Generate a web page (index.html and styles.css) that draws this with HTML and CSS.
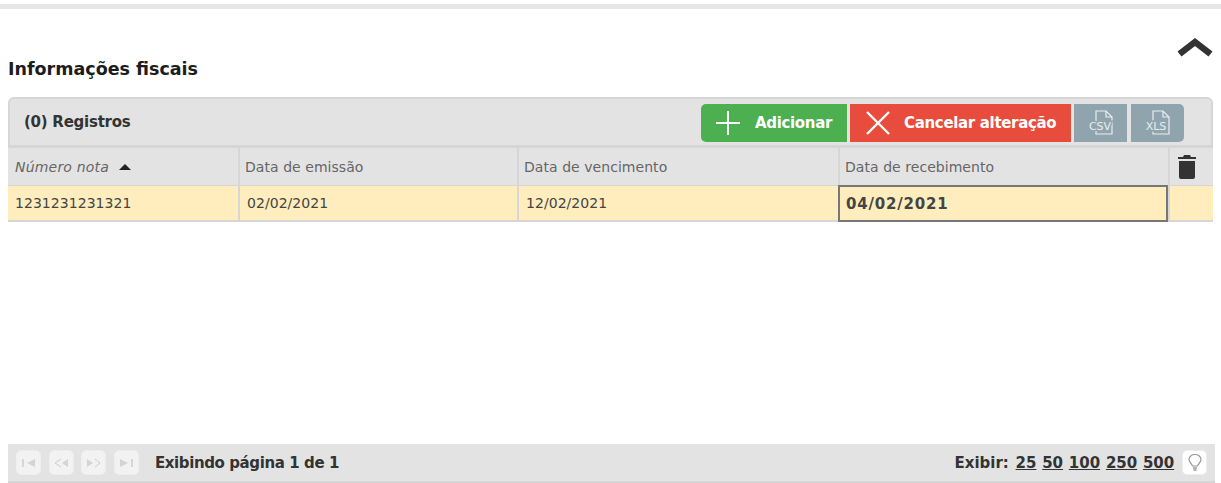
FILE: index.html
```html
<!DOCTYPE html>
<html lang="en">
<head>
    <meta charset="UTF-8">
    <title>Informações fiscais</title>
    <link rel="stylesheet" href="styles.css">
</head>
<body>

<div class="topLine"></div>

<div class="titleBar">
    <h2>Informações fiscais</h2>
    <a href="javascript:;" class="btnCollapse">
        <svg width="36" height="22" viewBox="0 0 36 22"><path d="M2.500 18 L18 6 L33.500 18" fill="none" stroke="#333" stroke-width="6.500"/></svg>
    </a>
</div>

<div class="grid">
    <div class="gridHead">
        <b>(0) Registros</b>
        <div class="tools">
            <a href="javascript:;" class="btn green">
                <svg width="26" height="26" viewBox="0 0 26 26"><path d="M13 1V25M1 13H25" stroke="#fff" stroke-width="2"/></svg>
                <span>Adicionar</span>
            </a>
            <a href="javascript:;" class="btn red">
                <svg width="26" height="26" viewBox="0 0 26 26"><path d="M2 2L24 24M24 2L2 24" stroke="#fff" stroke-width="2.4"/></svg>
                <span>Cancelar alteração</span>
            </a>
            <a href="javascript:;" class="btnFile">
                <svg width="30" height="32" viewBox="0 0 30 32"><path d="M10 14V4H20L26 10V27H10V24M20 4V10H26" fill="none" stroke="#e8eef0" stroke-width="1.200"/><text x="14" y="23" text-anchor="middle">CSV</text></svg>
            </a>
            <a href="javascript:;" class="btnFile lastBtn">
                <svg width="30" height="32" viewBox="0 0 30 32"><path d="M10 14V4H20L26 10V27H10V24M20 4V10H26" fill="none" stroke="#e8eef0" stroke-width="1.200"/><text x="13" y="23" text-anchor="middle">XLS</text></svg>
            </a>
        </div>
    </div>
    <div class="row thead">
        <div class="cell"><i>Número nota</i><span class="sort"></span></div>
        <div class="cell">Data de emissão</div>
        <div class="cell">Data de vencimento</div>
        <div class="cell">Data de recebimento</div>
        <div class="cell trash">
            <svg width="18" height="24" viewBox="0 0 18 24"><path d="M6 0H12L13 2H18V4H0V2H5ZM1 6H17V22Q17 24 15 24H3Q1 24 1 22Z" fill="#333"/></svg>
        </div>
    </div>
    <div class="row tbody">
        <div class="cell">1231231231321</div>
        <div class="cell pad">02/02/2021</div>
        <div class="cell pad">12/02/2021</div>
        <div class="cell editing">04/02/2021</div>
        <div class="cell"></div>
    </div>
</div>

<div class="pager">
    <div class="pagerLeft">
        <a href="javascript:;" class="pageBtn"><svg width="14" height="10" viewBox="0 0 14 10"><path d="M1 1V9" stroke="#ccc" stroke-width="1.500"/><path d="M13 1V9L5 5Z" fill="#d4d4d4"/></svg></a>
        <a href="javascript:;" class="pageBtn"><svg width="16" height="10" viewBox="0 0 16 10"><path d="M8 1L2 5L8 9" fill="none" stroke="#ccc"/><path d="M15 1V9L9 5Z" fill="#d4d4d4"/></svg></a>
        <a href="javascript:;" class="pageBtn"><svg width="16" height="10" viewBox="0 0 16 10"><path d="M1 1V9L7 5Z" fill="#d4d4d4"/><path d="M9 1L14 5L9 9" fill="none" stroke="#ccc"/></svg></a>
        <a href="javascript:;" class="pageBtn"><svg width="14" height="10" viewBox="0 0 14 10"><path d="M1 1V9L9 5Z" fill="#d4d4d4"/><path d="M13 1V9" stroke="#ccc" stroke-width="1.500"/></svg></a>
        <b>Exibindo página 1 de 1</b>
    </div>
    <div class="pagerRight">
        <b>Exibir:</b>
        <a href="javascript:;">25</a>
        <a href="javascript:;">50</a>
        <a href="javascript:;">100</a>
        <a href="javascript:;">250</a>
        <a href="javascript:;">500</a>
        <span class="pageBtn bulb">
            <svg width="14" height="18" viewBox="0 0 14 18"><path d="M4.500 12C4 9.500 1 8.500 1 5.500A6 5 0 0 1 13 5.500C13 8.500 10 9.500 9.500 12Z" fill="none" stroke="#999" stroke-width="1.200"/><path d="M5 14H9M5.500 16H8.500" stroke="#999" stroke-width="1.400"/></svg>
        </span>
    </div>
</div>

</body>
</html>
```

FILE: styles.css
```css
*{
    margin:0;
    padding:0;
    box-sizing: border-box;
    text-decoration: none;
}
html,body{
    height: 483px;
    overflow: hidden;
}
body{
    font-family: "DejaVu Sans", sans-serif;
    font-size: 14px;
    color: #333;
    background: #fff;
    display: flex;
    flex-direction: column;
    padding-top: 4px;
}
a{
    color: #333;
}
.topLine{
    height: 5px;
    background: #e6e6e6;
}
.titleBar{
    height: 88px;
    padding: 0 8px 0 8px;
    display: flex;
    justify-content: space-between;
}
.titleBar h2{
    font-size: 17.500px;
    line-height: 22px;
    color: #1c1c1c;
    padding-top: 49px;
    font-family: "DejaVu Sans", sans-serif;
}
.btnCollapse{
    padding-top: 27px;
}
.grid{
    margin-left: 8px;
    width: 1205px;
    flex: 1;
}
.gridHead{
    height: 51px;
    background: #e3e3e3;
    border: 2px solid #d6d6d6;
    border-bottom-width: 3px;
    border-radius: 6px 6px 0 0;
    padding: 5px 0 3px 14px;
    display: flex;
    justify-content: space-between;
    align-items: center;
}
.gridHead b{
    font-size: 15px;
    letter-spacing: -0.250px;
    padding-bottom: 3px;
}
.tools{
    display: flex;
    gap: 3px;
    height: 38px;
    margin-right: 27px;
}
.btn{
    display: flex;
    align-items: center;
    color: #fff;
    font-weight: bold;
    font-size: 15px;
    letter-spacing: -0.330px;
}
.green{
    width: 146px;
    background: #4caf50;
    border-radius: 5px 0 0 5px;
    padding-left: 14px;
    gap: 14px;
}
.red{
    width: 221px;
    background: #e74c3c;
    padding-left: 15px;
    gap: 13px;
}
.btnFile{
    width: 53px;
    background: #90a4ae;
    display: flex;
    align-items: center;
    justify-content: center;
}
.lastBtn{
    margin-left: 1px;
    border-radius: 0 5px 5px 0;
}
.btnFile text{
    font-size: 11px;
    fill: #e8eef0;
    stroke: #90a4ae;
    stroke-width: 3px;
    paint-order: stroke;
}
.row{
    display: grid;
    grid-template-columns: 230px 279px 321px 330px 45px;
}
.thead{
    height: 37px;
    background: #e3e3e3;
    color: #666;
    letter-spacing: 0.050px;
}
.tbody{
    height: 37px;
    background: #ffedbd;
    border-top: 1px solid #d6d6d6;
    border-bottom: 2px solid #d6d6d6;
    letter-spacing: 0.050px;
    color: #444;
}
.cell{
    display: flex;
    align-items: center;
    padding-left: 5px;
    border-left: 2px solid #d6d6d6;
}
.cell:first-child{
    border-left: 0;
    padding-left: 7px;
}
.cell i{
    letter-spacing: 0.200px;
}
.pad{
    padding-left: 7px;
}
.sort{
    border: 6px solid transparent;
    border-top: 0;
    border-bottom: 6px solid #222;
    margin-left: 10px;
}
.trash{
    padding-left: 8px;
}
.editing{
    border: 2px solid #777;
    padding-left: 6px;
    font-weight: bold;
    font-size: 15px;
    letter-spacing: 0.800px;
    margin: -1px 0 -2px;
}
.pager{
    height: 39px;
    margin-left: 8px;
    width: 1207px;
    background: #e3e3e3;
    border-bottom: 2px solid #d6d6d6;
    display: flex;
    justify-content: space-between;
    align-items: center;
    padding: 0 8px;
}
.pagerLeft,.pagerRight{
    display: flex;
    align-items: center;
}
.pagerLeft{
    gap: 7.500px;
}
.pagerLeft b{
    margin-left: 9px;
    font-size: 15px;
    letter-spacing: -0.400px;
}
.pagerRight{
    gap: 5.750px;
    font-size: 15px;
}
.pagerRight b{
    margin-right: 1px;
}
.pagerRight a{
    font-weight: bold;
    text-decoration: underline;
}
.pageBtn{
    width: 25px;
    height: 25px;
    background: #f2f2f2;
    border: 1px solid #eee;
    border-radius: 5px;
    display: flex;
    align-items: center;
    justify-content: center;
}
.bulb{
    background: #fff;
    margin-left: 2px;
}
```
